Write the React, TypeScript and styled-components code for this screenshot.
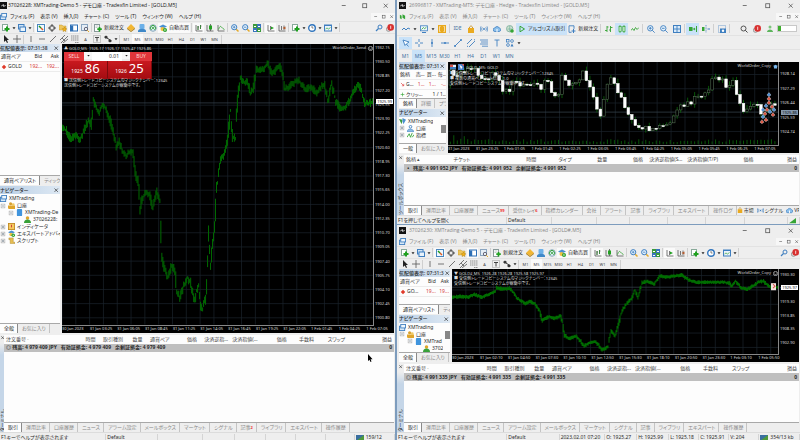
import React from "react";
import styled, { createGlobalStyle, css } from "styled-components";

const Global = createGlobalStyle`
  * { box-sizing: border-box; }
  html, body { margin: 0; background: #7d9cbd; }
  body, button, input, table {
    font-family: "Noto Sans", "Noto Sans CJK JP", sans-serif;
    font-size: 5px;
    line-height: 7px;
    color: #2b2b2b;
    font-feature-settings: "palt";
  }
  button, input { border: 0; padding: 0; margin: 0; background: none; border-radius: 0; }
`;

/* ---------- layout ---------- */

const Desktop = styled.main`
  display: grid;
  grid-template-columns: minmax(0, 395fr) minmax(0, 403fr);
  column-gap: 2px;
  height: 100vh;
  min-height: 420px;
  overflow: hidden;
`;
const RightColumn = styled.div`
  display: grid;
  grid-template-rows: minmax(0, 224fr) minmax(0, 215fr);
  row-gap: 1px;
  min-height: 0;
`;
const Window = styled.section<{ $rows: string }>`
  display: grid;
  grid-template-columns: minmax(0, 1fr);
  grid-template-rows: auto ${(p) => p.$rows} auto;
  background: #eeeeee;
  min-height: 0;
  overflow: hidden;
  white-space: nowrap;
`;
const TitleBar = styled.header<{ $inactive?: boolean }>`
  display: flex;
  align-items: center;
  gap: ${(p) => (p.$inactive ? 3 : 1)}px;
  height: 11px;
  color: ${(p) => (p.$inactive ? "#858585" : "#111")};
  padding-left: ${(p) => (p.$inactive ? 2 : 0)}px;
`;
const TitleText = styled.span`
  font-family: "Open Sans", "Noto Sans CJK JP", sans-serif;
  flex: 1;
`;
const WinButton = styled.button<{ $small?: boolean }>`
  width: ${(p) => (p.$small ? 8 : 20)}px;
  height: 7px;
  display: grid;
  place-items: center;
  color: #555;
  background: ${(p) => (p.$small ? "#f7f7f7" : "none")};
`;
const MenuBar = styled.nav<{ $inactive?: boolean }>`
  display: flex;
  align-items: center;
  height: 10px;
  padding-left: ${(p) => (p.$inactive ? 2 : 0)}px;
  color: ${(p) => (p.$inactive ? "#858585" : "#222")};
`;
const MenuButton = styled.button`
  color: inherit;
  padding: 0 3px;
`;
const Spacer = styled.span`
  flex: 1;
`;
const Bar = styled.div<{ $h: number; $inset?: boolean }>`
  display: flex;
  align-items: center;
  height: ${(p) => p.$h}px;
  padding-left: ${(p) => (p.$inset ? 2 : 0)}px;
  border-top: 1px solid #e2e2e2;
`;
const Tool = styled.button<{ $on?: boolean; $wide?: boolean }>`
  display: grid;
  place-items: center;
  width: ${(p) => (p.$wide ? 13 : 11)}px;
  height: ${(p) => (p.$wide ? 12 : 10)}px;
  flex: none;
  font-size: ${(p) => (p.$wide ? 5 : 4)}px;
  color: ${(p) => (p.$wide ? "#3d6f9f" : "#444")};
  ${(p) =>
    p.$on &&
    css`
      background: ${p.$wide ? "#c9e2f8" : "#fafafa"};
    `}
`;
const CaretBox = styled.span`
  display: grid;
  place-items: center;
  width: 5px;
  height: 8px;
`;
const Sep = styled.i`
  width: 1px;
  height: 9px;
  margin: 0 1px;
  background: #cfcfcf;
`;
const TextTool = styled.button<{ $on?: boolean; $blue?: boolean }>`
  display: flex;
  align-items: center;
  gap: 2px;
  height: ${(p) => (p.$blue ? 12 : 10)}px;
  padding: 0 ${(p) => (p.$blue ? 2 : 1)}px;
  background: ${(p) => (p.$blue ? "#c9e2f8" : p.$on ? "#fafafa" : "none")};
  color: #222;
`;
const Meter = styled.span`
  width: 20px;
  height: 7px;
  margin: 0 3px 0 1px;
  background: linear-gradient(90deg, #3fae2f 15%, #fff 15%);
  border: 1px solid #c8c8c8;
`;

/* ---------- workspace ---------- */

const Workspace = styled.div<{ $side: number; $inset?: boolean }>`
  display: grid;
  grid-template-columns: ${(p) => p.$side}px minmax(0, 1fr);
  column-gap: 2px;
  min-height: 0;
  padding-left: ${(p) => (p.$inset ? 2 : 0)}px;
  padding-right: 1px;
`;
const Sidebar = styled.aside`
  display: flex;
  flex-direction: column;
  gap: 1px;
  min-height: 0;
  overflow: hidden;
`;
const Panel = styled.section<{ $h?: number }>`
  display: flex;
  flex-direction: column;
  background: #fdfdfd;
  overflow: hidden;
  min-height: 0;
  flex: ${(p) => (p.$h ? `0 0 ${p.$h}%` : "1 1 0")};
`;
const PanelHead = styled.h2`
  display: flex;
  justify-content: space-between;
  flex: none;
  align-items: center;
  margin: 0;
  height: 8px;
  padding-right: 1px;
  overflow: hidden;
  background: linear-gradient(90deg, #b9cfe6, #dde8f3);
  font-size: 5px;
  font-weight: 500;
`;
const Fill = styled.div`
  flex: 1;
  min-height: 0;
  overflow: hidden;
  display: flex;
  align-items: flex-start;
  justify-content: space-between;
`;
const Quotes = styled.table`
  width: 100%;
  border-collapse: collapse;
  th, td {
    padding: 1px;
    height: 9px;
    font-weight: 400;
    text-align: right;
    border-bottom: 1px solid #ececec;
  }
  th:first-child, td:first-child { text-align: left; }
  td + td { color: #d63c3c; }
`;
const Symbol = styled.span`
  display: flex;
  align-items: center;
  gap: 1px;
`;
const Tree = styled.ul`
  list-style: none;
  margin: 0;
  padding: 1px 0 0;
  overflow: hidden;
`;
const Node = styled.li<{ $d: number }>`
  display: flex;
  align-items: center;
  gap: 2px;
  height: 7px;
  padding-left: ${(p) => p.$d * 8}px;
`;
const Scroll = styled.i`
  width: 5px;
  height: 8px;
  margin-top: 8px;
  background: #868686;
`;
const Tabs = styled.div`
  display: flex;
  flex: none;
  align-items: center;
  height: 10px;
  overflow: hidden;
  background: #eeeeee;
  border-top: 1px solid #a8a8a8;
`;
const Tab = styled.button<{ $on?: boolean }>`
  flex: none;
  height: 9px;
  padding: 0 3px 0 4px;
  color: ${(p) => (p.$on ? "#222" : "#888")};
  border-right: 1px solid ${(p) => (p.$on ? "#8a8a8a" : "#c4c4c4")};
  background: ${(p) => (p.$on ? "#fdfdfd" : "none")};
  sub { color: #e33; font-size: 4px; font-weight: 700; line-height: 0; vertical-align: baseline; }
`;
const TabAction = styled.button`
  display: flex;
  align-items: center;
  gap: 1px;
  padding-right: 3px;
`;

/* ---------- terminal ---------- */

const Terminal = styled.section<{ $side: number }>`
  display: grid;
  grid-template-columns: ${(p) => p.$side}px minmax(0, 1fr);
  min-height: 0;
  padding: 2px 1px 0 0;
`;
const Grip = styled.div`
  display: flex;
  flex-direction: column;
  justify-content: space-between;
  align-items: center;
  overflow: hidden;
  background: linear-gradient(#eeeeee 8px, #c5d6e8 20px, #c5d6e8);
`;
const Sideways = styled.span`
  writing-mode: vertical-rl;
  text-orientation: sideways;
  transform: rotate(180deg);
  line-height: 5px;
`;
const TerminalBody = styled.div`
  display: flex;
  flex-direction: column;
  min-height: 0;
  background: #fdfdfd;
`;
const Orders = styled.table`
  width: 100%;
  table-layout: fixed;
  border-collapse: collapse;
  th, td { padding: 0 2px; height: 9px; }
  th { font-weight: 400; color: #444; }
  td {
    height: 8px;
    font-weight: 700;
    white-space: pre;
    background: #bfbfbf;
  }
  td:last-child { text-align: right; }
`;
const Col = styled.col<{ $w: number }>`
  width: ${(p) => p.$w}%;
`;
const Th = styled.th<{ $left?: boolean }>`
  text-align: ${(p) => (p.$left ? "left" : "right")};
`;
const Status = styled.footer<{ $h: number }>`
  display: flex;
  height: ${(p) => p.$h}px;
  padding-top: 1px;
  overflow: hidden;
  border-top: 1px solid #dcdcdc;
`;
const StatusCell = styled.span<{ $grow: number }>`
  display: flex;
  align-items: center;
  gap: 2px;
  flex: ${(p) => p.$grow} 1 0;
  min-width: 0;
  height: 7px;
  padding-left: 1px;
  border-right: 1px solid #d4d4d4;
`;

/* ---------- chart ---------- */

const ChartBox = styled.div`
  position: relative;
  display: grid;
  grid-template-columns: minmax(0, 1fr) 20px;
  grid-template-rows: minmax(0, 1fr) 7px;
  background: #000;
  color: #dcdcdc;
  font-size: 4px;
  line-height: 6px;
  min-height: 0;
  overflow: hidden;
`;
const Plot = styled.svg`
  display: block;
  width: 100%;
  height: 100%;
  min-height: 0;
  border-right: 1px solid #888;
  border-bottom: 1px solid #888;
`;
const PriceAxis = styled.div<{ $top: number; $bottom: number }>`
  display: flex;
  flex-direction: column;
  justify-content: space-between;
  padding: ${(p) => `${p.$top}px 0 ${p.$bottom}px 1px`};
  min-height: 0;
`;
const PriceTag = styled.span<{ $top: number; $dim?: boolean }>`
  position: absolute;
  right: 1px;
  top: ${(p) => p.$top}%;
  padding: 0 1px;
  line-height: 5px;
  color: #111;
  background: ${(p) => (p.$dim ? "#8497ac" : "#fff")};
`;
const TimeAxis = styled.div<{ $end: number }>`
  grid-column: 1 / -1;
  display: grid;
  grid-template-columns: repeat(12, minmax(0, 1fr));
  padding-right: ${(p) => p.$end}px;
`;
const Legend = styled.div`
  position: absolute;
  top: 2px;
  left: 2px;
  display: flex;
  flex-direction: column;
  line-height: 5px;
`;
const Symbols = styled.span`
  display: flex;
  align-items: center;
  gap: 2px;
  padding-bottom: 1px;
`;
const Expert = styled.span`
  position: absolute;
  top: 1px;
  right: 21px;
  display: flex;
  align-items: center;
  gap: 2px;
`;
const Trade = styled.div`
  display: grid;
  grid-template-columns: 20px 46px 22px;
  grid-template-rows: 9px 17px;
  width: 88px;
  background: #b8141a;
`;
const TradeSide = styled.button`
  color: #ffd5d5;
  background: #e0353a;
`;
const Volume = styled.div`
  display: grid;
  grid-template-columns: 8px 1fr 8px;
  background: #ececec;
`;
const VolumeInput = styled.input`
  width: 100%;
  min-width: 0;
  background: #fff;
  text-align: right;
  padding-right: 3px;
`;
const Prices = styled.div`
  grid-column: 1 / -1;
  display: grid;
  grid-template-columns: 1fr 1fr;
`;
const Price = styled.button`
  display: flex;
  align-items: baseline;
  justify-content: center;
  gap: 2px;
  color: #fff;
  line-height: 15px;
  background: linear-gradient(#c9191f, #a30c11);
  border-right: 1px solid #7a0a0d;
  b { font-weight: 400; font-size: 13px; }
`;
const Pointer = styled.svg`
  position: absolute;
  left: 46%;
  top: 80.5%;
  width: 5px;
  height: 8px;
`;

/* ---------- icons ---------- */

const G = "#35a535";
const B = "#3f7fc0";
const Y = "#e3a92c";
const K = "#555";

const ICONS: Record<string, React.ReactNode> = {
  app: (<><rect width="8" height="8" fill="#111" /><path d="M1.5 4.5 4 3v2l2.500-1" stroke="#ddd" fill="none" /></>),
  doc: (<><rect x=".5" y="2.500" width="6" height="5" fill="#d7e8f7" stroke={B} /><rect x="2" y=".5" width="5.500" height="4" fill="#eef6fc" stroke={B} /></>),
  mt5: (<path d="M1 2l2 1v4L1 6zM4 1.500 7 3v4L4 5.500z" fill={G} />),
  plus: (<><rect x=".5" y=".5" width="5" height="6" fill="#fff" stroke="#8a9" /><path d="M5 2.500v5M2.500 5h5" stroke="#1fa01f" strokeWidth="2" /></>),
  windows: (<><rect x=".5" y=".5" width="5.500" height="4.500" fill="#cfe3f5" stroke={B} /><rect x="2" y="3" width="5.500" height="4.500" fill="#e9f3fb" stroke={B} /></>),
  market: (<><rect x=".5" y=".5" width="7" height="7" fill="#eef7ff" stroke="#4a86bd" /><path d="M2 2l2 2" stroke="#1a9a1a" strokeWidth="1.500" /><path d="M4 4l2 2" stroke="#e05a20" strokeWidth="1.500" /></>),
  target: (<><circle cx="4" cy="4" r="2.500" fill="none" stroke={K} /><path d="M4 0v3M4 5v3M0 4h3M5 4h3" stroke={K} /></>),
  folder: (<><path d="M0 1h3l1 1h3v4H0z" fill="#efc65a" stroke="#b58a20" strokeWidth=".4" /><path d="M5.500 3l.8 1.500 1.600.2-1.200 1.200.3 1.700-1.500-.8L4 7.600l.3-1.700L3.100 4.700l1.600-.2z" fill="#f5b21b" stroke="#a57a10" strokeWidth=".4" /></>),
  panel: (<><rect x=".5" y="1" width="7" height="6" fill="#fff" stroke="#2d6fb5" /><path d="M1 1.500h2.200V7H1z" fill="#2d6fb5" /></>),
  tester: (<><rect x=".5" y=".5" width="6" height="6" fill="#e6eef6" stroke="#8aa5c0" /><circle cx="5" cy="5" r="1.700" fill="none" stroke="#667" /><path d="M6.200 6.200 8 8" stroke={Y} /></>),
  order: (<><rect x=".5" y=".5" width="5" height="7" fill="#fff" stroke="#899" /><path d="M1.500 2h3M1.500 3.500h2" stroke="#899" strokeWidth=".5" /><path d="M5.500 3v4.500M3.300 5.200h4.500" stroke="#1fa01f" strokeWidth="1.700" /></>),
  diamond: (<><path d="M4 0 8 4 4 7 0 4z" fill="#f2b632" /><path d="M0 4l4 3 4-3v1L4 8 0 5z" fill="#a87a16" /></>),
  signal: (<><rect x="1.500" y="0" width="5" height="5" rx="1" fill="#6cb0e8" /><path d="M0 7c0-3 8-3 8 0v1H0z" fill="#3f88c8" /></>),
  globe: (<><circle cx="4" cy="4" r="3.300" fill="#d9e9f5" stroke="#8ab" /><path d="M2.500 6a2.500 2.500 0 1 1 3 0" fill="none" stroke={G} /><circle cx="4" cy="4" r="1" fill={G} /></>),
  expert: (<><path d="M0 2.500 4 .5l4 2-4 2z" fill="#4a90d0" /><circle cx="3.500" cy="5" r="2" fill="#f0c040" /><circle cx="6" cy="6" r="2" fill="#2ba02b" /><path d="M5.500 5v2l1.500-1z" fill="#fff" /></>),
  bars: (<><path d="M1 1v6h6.500M3 2v4M5.500 1v4M3 3h1M5.500 2h1" stroke={K} strokeWidth=".8" fill="none" /><path d="M3 2v4M5.500 1v4" stroke="#383" strokeWidth=".8" /></>),
  candles: (<><path d="M1 1v6h6.500M4.500 0v7" stroke={K} strokeWidth=".8" fill="none" /><rect x="3" y="1.500" width="3" height="4" fill="#22a022" /></>),
  line: (<><path d="M1 1v6h6.500" stroke={K} strokeWidth=".8" fill="none" /><path d="M1.500 5.500Q3 1 4.500 3t3 2.500" stroke={G} fill="none" strokeWidth=".8" /></>),
  zoomin: (<><path d="M5 5l2.500 2.500" stroke={Y} strokeWidth="1.500" /><circle cx="3.200" cy="3.200" r="2.600" fill="#e3f1fc" stroke={B} /><path d="M3.200 2v2.400M2 3.200h2.400" stroke={B} strokeWidth=".8" /></>),
  zoomout: (<><path d="M5 5l2.500 2.500" stroke={Y} strokeWidth="1.500" /><circle cx="3.200" cy="3.200" r="2.600" fill="#e3f1fc" stroke={B} /><path d="M2 3.200h2.400" stroke={B} strokeWidth=".8" /></>),
  tile: (<><path d="M0 0h4v4H0zM4 4h4v4H4z" fill="#3b9b3b" /><path d="M4 0h4v4H4zM0 4h4v4H0z" fill="#3a74bd" /><path d="M1 2h2v1H1zM5 2h2v1H5zM1 6h2v1H1zM5 6h2v1H5z" fill="#fff" /></>),
  shift: (<><path d="M1 1v6h6.500M3.500 2v4" stroke={K} strokeWidth=".8" fill="none" /><path d="M4 2.500 7 4 4 5.500z" fill="#22a022" /></>),
  shift2: (<><path d="M1 1v6h6.500M3.500 2v4M6 1.500V6" stroke={K} strokeWidth=".8" fill="none" /><path d="M7.500 2.500 4.500 4l3 1.500z" fill="#b55a2a" /></>),
  clock: (<><circle cx="4" cy="4" r="3.300" fill="#fff" stroke="#2f74bd" strokeWidth="1.400" /><path d="M4 2v2h1.500" stroke={K} strokeWidth=".7" fill="none" /></>),
  template: (<><rect x=".5" y="1" width="7" height="6" fill="#e9f2fa" stroke={B} /><path d="M.5 1.500h7" stroke={B} /><path d="M1.500 5l1.500-1 1.500 1 2-1.500" stroke={G} strokeWidth=".7" fill="none" /></>),
  search: (<><circle cx="5" cy="3" r="2" fill="none" stroke="#3f7fc0" /><path d="M3.500 4.500 1 7" stroke="#3f7fc0" strokeWidth="1.200" /></>),
  search5: (<><circle cx="3.500" cy="3.500" r="2.500" fill="none" stroke="#444" strokeWidth=".9" /><path d="M5.300 5.300 7.500 7.500" stroke="#444" /></>),
  bell: (<><circle cx="2.500" cy="5.200" r="2.200" fill="#ddd" stroke="#777" strokeWidth=".6" /><circle cx="4.700" cy="3.400" r="3.300" fill="#d8302f" /><path d="M4.700 1.700v3.200" stroke="#fff" strokeWidth=".8" /></>),
  caret: (<path d="M2 3h4L4 5.500z" fill="#222" />),
  cursor: (<path d="M2 0v7l1.700-1.500L5 8l1-.5L4.900 5H7z" fill="#222" />),
  cross: (<path d="M4 0v8M0 4h8" stroke={K} strokeWidth=".8" />),
  vline: (<path d="M4 1v6" stroke={K} strokeWidth=".8" />),
  hline: (<path d="M1 4h6" stroke={K} strokeWidth=".8" />),
  diag: (<path d="M1 7l6-6" stroke={K} strokeWidth=".8" />),
  channel: (<path d="M0 5l5-5M1 8l7-7M3 8l5-4M2 3l3 3" stroke={K} strokeWidth=".8" />),
  fibo: (<path d="M0 1h8M0 3h8M0 5h8M4 7.500h4" stroke="#777" strokeWidth=".8" strokeDasharray="1.500 .5" />),
  label: (<><rect x=".5" y=".5" width="7" height="7" fill="none" stroke="#777" strokeWidth=".7" strokeDasharray="1 1" /><path d="M2 2.500h4M4 2.500V6.500" stroke="#444" /></>),
  arrows: (<><path d="M0 2l2-1.500L4 2 2 4zM4 6l2-2 2 2-2 1.500z" fill="#333" /><path d="M3 3l3 2" stroke="#333" /></>),
  wave5: (<path d="M0 5l2-2 2 2 2-2 2 1" fill="none" stroke={B} strokeWidth="1" />),
  screen5: (<><rect x=".5" y=".8" width="7" height="5" fill="#eaf4fc" stroke={B} strokeWidth=".8" /><path d="M2 7.500h4" stroke={B} /><path d="M1.500 4.500l2-2 1.200 1.200L6.500 2" fill="none" stroke={G} strokeWidth=".8" /></>),
  box5: (<><rect width="8" height="8" fill="#e9a91c" /><path d="M2.500 1.500h-1v5h1M5.500 1.500h1v5h-1" stroke="#fff" strokeWidth=".6" fill="none" /></>),
  bag5: (<><path d="M2.500 3V2q1.500-2.500 3 0v1" fill="none" stroke="#c58a12" strokeWidth=".8" /><path d="M1 3h6v5H1z" fill="#eaaa20" /></>),
  radio5: (<><circle cx="4" cy="4" r=".9" fill={B} /><path d="M2.300 2.300q-1.500 1.700 0 3.400M5.700 2.300q1.500 1.700 0 3.400M1 1.300q-1.500 2.700 0 5.400M7 1.300q1.500 2.700 0 5.400" fill="none" stroke={B} strokeWidth=".7" /></>),
  cloud5: (<><path d="M2 6.500A1.700 1.700 0 0 1 1.800 3 2.500 2.500 0 0 1 6.300 3a1.800 1.800 0 0 1 0 3.500z" fill="#8cc0ec" stroke={B} strokeWidth=".8" /><path d="M4 4v3" stroke="#fff" /></>),
  globe5: (<><circle cx="3.700" cy="3.700" r="3.200" fill="#cfe3d0" stroke="#7a9" strokeWidth=".8" /><path d="M1.500 4h4.500M3.700 1v5.500" stroke="#6a9" strokeWidth=".6" /><circle cx="6" cy="6" r="1.800" fill={G} /></>),
  play5: (<path d="M2 1.200 6.500 4 2 6.800z" fill="none" stroke={G} strokeWidth="1" />),
  order5: (<><path d="M1 .8h5v3M1 .8v6.500h2.500" fill="none" stroke={B} strokeWidth=".9" /><path d="M5.500 4v4M3.500 6h4" stroke={B} /></>),
  bars5: (<path d="M2 1v6M0 5.500h2M2 2h1.500M5.500 1v6M4 5h1.500M5.500 2.500h2" stroke={G} strokeWidth=".9" />),
  candles5: (<><path d="M2 0v8M6 0v8" stroke={G} strokeWidth=".7" /><rect x="1" y="1.500" width="2.200" height="5" fill="#c9ecd0" stroke={G} strokeWidth=".7" /><rect x="4.800" y="1.500" width="2.200" height="5" fill="#c9ecd0" stroke={G} strokeWidth=".7" /></>),
  line5: (<path d="M0 5.500l1.500-2 1.500 2 1.500-3 1.500 2L8 2.500" fill="none" stroke={G} strokeWidth=".9" />),
  zoomin5: (<><circle cx="3.300" cy="3.300" r="2.700" fill="#e3f1fc" stroke={B} strokeWidth=".9" /><path d="M5.300 5.300 7.700 7.700M3.300 2v2.600M2 3.300h2.600" stroke={B} strokeWidth=".9" /></>),
  zoomout5: (<><circle cx="3.300" cy="3.300" r="2.700" fill="#e3f1fc" stroke={B} strokeWidth=".9" /><path d="M5.300 5.300 7.700 7.700M2 3.300h2.600" stroke={B} strokeWidth=".9" /></>),
  tile5: (<><rect x=".5" y=".5" width="7" height="7" fill="#d8eafa" stroke={B} /><path d="M4 0v8M0 4h8" stroke={B} strokeWidth=".9" /></>),
  shift5: (<><rect y="2" width="3.500" height="4" fill={G} /><path d="M3.500 4h2M7.500 1v6" stroke={G} /><path d="M5 2.500 6.500 4 5 5.500z" fill={G} /></>),
  shiftb5: (<><rect y="2" width="2.500" height="4" fill={G} /><path d="M4 0v8" stroke={B} strokeDasharray="1 .6" strokeWidth=".8" /><path d="M8 4H5.500" stroke={B} /></>),
  camera5: (<><rect x=".5" y=".5" width="7" height="7" fill="none" stroke={B} strokeWidth=".7" strokeDasharray="1 1" /><rect x="2" y="3.500" width="6" height="4.500" fill={B} /><circle cx="5" cy="5.700" r="1.200" fill="#fff" /></>),
  user5: (<><circle cx="4" cy="2" r="1.500" fill="#7cc47c" /><path d="M1 7c0-3.500 6-3.500 6 0z" fill="#5cb45c" /></>),
  cursor5: (<path d="M1 1l2 5.500L4.300 5 6.500 7.500M1 1l6 2L4.300 5" fill="#fff" stroke={B} strokeWidth=".9" />),
  cross5: (<path d="M4 0v3M4 5v3M0 4h3M5 4h3" stroke={B} strokeWidth=".9" />),
  vline5: (<><path d="M4 0v8" stroke={B} strokeWidth=".9" /><circle cx="4" cy="4" r="1" fill={B} /></>),
  hline5: (<><path d="M0 4h8" stroke={B} strokeWidth=".9" /><circle cx="4" cy="4" r="1" fill={B} /></>),
  diag5: (<><path d="M1 7l6-6" stroke={B} strokeWidth=".9" /><circle cx="1" cy="7" r="1" fill={B} /><circle cx="7" cy="1" r="1" fill={B} /></>),
  channel5: (<path d="M0 5l5-5M2 8l6-6M0 7l1 .7M7 .5l1 .5" stroke={B} strokeWidth=".9" />),
  fibo5: (<path d="M0 1h8M1 3h7M0 5h8M2 7.200h6" stroke={B} strokeWidth=".8" />),
  text5: (<path d="M1.500 1h5M4 1v6.500" stroke={B} strokeWidth=".9" />),
  shapes5: (<><rect x=".5" y=".5" width="2.500" height="2.500" fill="none" stroke={B} strokeWidth=".8" /><circle cx="6" cy="2" r="1.400" fill="none" stroke={B} strokeWidth=".8" /><circle cx="2" cy="6" r="1.400" fill="none" stroke={B} strokeWidth=".8" /><path d="M4.500 7.500 6 4.500l1.500 3z" fill={B} /></>),
  gold: (<path d="M4 1l3 3-3 3-3-3z" fill="#e03a2a" />),
  down: (<path d="M1.500 1.500 6 6M6 3v3H3" stroke="#d33" fill="none" />),
  add: (<path d="M4 1v6M1 4h6" stroke={G} />),
  people: (<><circle cx="3" cy="2" r="1.800" fill="#d8a030" /><path d="M0 7V4h8v4H1z" fill="#e0a52a" /><circle cx="6" cy="3" r="1.600" fill="#f0c860" /></>),
  peopleB: (<><circle cx="4" cy="2" r="1.500" fill="none" stroke={B} /><path d="M0 7.500Q1 4 4 4.500T8 7.500z" fill="#8abde6" stroke={B} strokeWidth=".7" /></>),
  server: (<rect x="1" y="0" width="6" height="8" rx="1" fill="#3f94dd" />),
  user: (<><circle cx="4" cy="2.300" r="2" fill="#e0a52a" /><path d="M0 8q0-4 4-4t4 4z" fill="#38a038" /></>),
  indicator: (<><rect x=".5" y=".5" width="7" height="7" fill="#f5c860" stroke="#c08a20" /><path d="M4 2v3" stroke="#c33" /></>),
  script: (<path d="M1 1h5v5h2v1.500H2.500V3H1z" fill="#e8be50" stroke="#a8842a" strokeWidth=".5" />),
  indic5: (<path d="M0 6l2.500-4L4 6l2-5M6 6l2-3" stroke={G} fill="none" />),
  logo5: (<><path d="M0 1l4 1-1 5z" fill="#3d9a3d" /><path d="M4 0l4 2-3 5-1-3z" fill="#4a90d0" /></>),
  expand: (<><rect x="1.500" y="1.500" width="5" height="5" fill="#fff" stroke="#aaa" strokeWidth=".8" /><path d="M2.500 4h3M4 2.500v3" stroke="#456" strokeWidth=".7" /></>),
  collapse: (<><rect x="1.500" y="1.500" width="5" height="5" fill="#fff" stroke="#aaa" strokeWidth=".8" /><path d="M2.500 4h3" stroke="#456" strokeWidth=".7" /></>),
  min: (<path d="M2 4h4.500" stroke="currentColor" strokeWidth=".9" />),
  max: (<rect x="2" y="2" width="4.500" height="4.500" fill="none" stroke="currentColor" strokeWidth=".9" />),
  close: (<path d="M2 2l4.500 4.500M6.500 2 2 6.500" stroke="currentColor" strokeWidth=".9" />),
  conn: (<><rect y="1" width="8" height="6" fill="#3a6f9f" /><path d="M0 7l8-6v6z" fill="#4f9a3a" /></>),
  strength: (<path d="M0 7l8-6v6z" fill={G} />),
  smile: (<><circle cx="4" cy="4" r="3.400" fill="none" stroke="#ddd" /><path d="M2.300 4.800q1.700 1.700 3.400 0M2.500 3h.8M4.700 3h.8" stroke="#ddd" fill="none" /></>),
  hat: (<path d="M0 3l4-2 4 2-1.500 1v3h-5V4z" fill="#7ab8ee" />),
  flagA: (<><rect y="1" width="8" height="6" fill="#e8eef5" /><path d="M0 4h8v3H0z" fill="#3f7fc0" /><path d="M0 1h4v3H0z" fill="#d9534a" /></>),
  flagB: (<><rect y="0" width="8" height="8" fill="#4a7fc8" /><path d="M2 1l4 3-2 3z" fill="#fff" /><path d="M5 0h3v3z" fill="#d9534a" /></>),
};

const IconSvg = styled.svg<{ $s: number }>`
  display: block;
  flex: none;
  width: ${(p) => p.$s}px;
  height: ${(p) => p.$s}px;
`;
const Icon = ({ n, s = 8 }: { n: string; s?: number }) => (
  <IconSvg $s={s} viewBox="0 0 8 8" aria-hidden="true">{ICONS[n]}</IconSvg>
);

/* ---------- pieces ---------- */

const Title = ({ text, inactive }: { text: string; inactive?: boolean }) => (
  <TitleBar $inactive={inactive}>
    <Icon n="app" s={7} />
    <TitleText>{text}</TitleText>
    {["min", "max", "close"].map((n) => (
      <WinButton key={n} aria-label={n}><Icon n={n} s={7} /></WinButton>
    ))}
  </TitleBar>
);

const MENUS = ["ファイル (F)", "表示 (V)", "挿入(I)", "チャート (C)", "ツール (T)", "ウィンドウ (W)", "ヘルプ (H)"];
const Menu = ({ inactive, mt5 }: { inactive?: boolean; mt5?: boolean }) => (
  <MenuBar $inactive={inactive}>
    <Icon n={mt5 ? "mt5" : "doc"} s={7} />
    {MENUS.map((m) => <MenuButton key={m}>{m}</MenuButton>)}
    <Spacer />
    {["min", "max", "close"].map((n) => (
      <WinButton key={n} $small aria-label={`chart ${n}`}><Icon n={n} s={5} /></WinButton>
    ))}
  </MenuBar>
);

/* "|" is a separator, "v" a caret, a leading "*" marks a pressed button */
const Tools = ({ items, wide }: { items: string[]; wide?: boolean }) => (
  <>
    {items.map((raw, i) => {
      if (raw === "|") return <Sep key={i} />;
      if (raw === "v") return <CaretBox key={i}><Icon n="caret" s={6} /></CaretBox>;
      const on = raw[0] === "*";
      const n = on ? raw.slice(1) : raw;
      return (
        <Tool key={i} $on={on} $wide={wide} aria-label={n}>
          {ICONS[n] ? <Icon n={n} /> : n}
        </Tool>
      );
    })}
  </>
);

const Mt4Bars = ({ inset }: { inset?: boolean }) => (
  <>
    <Bar $h={12} $inset={inset}>
      <Tools items={["plus", "v", "windows", "v", "|", "*market", "target", "folder", "*panel", "tester", "|"]} />
      <TextTool><Icon n="order" />新規注文</TextTool>
      <Tools items={["diamond", "signal", "globe"]} />
      <TextTool $on><Icon n="expert" />自動売買</TextTool>
      <Tools items={["|", "*bars", "candles", "line", "|", "zoomin", "zoomout", "tile", "|", "*shift", "shift2", "|", "plus", "v", "clock", "v", "template", "v", "|"]} />
      <Spacer />
      <Tools items={["search", "bell"]} />
    </Bar>
    <Bar $h={11} $inset={inset}>
      <Tools items={["cursor", "cross", "|", "vline", "hline", "diag", "channel", "fibo", "A", "label", "arrows", "v", "|", "M1", "*M5", "M15", "M30", "H1", "H4", "D1", "W1", "MN", "|"]} />
    </Bar>
  </>
);

const Mt5Bars = () => (
  <>
    <Bar $h={14} $inset>
      <Tools wide items={["wave5", "v", "screen5", "v", "box5", "|", "IDE", "bag5", "radio5", "cloud5", "globe5"]} />
      <TextTool $blue><Icon n="play5" />アルゴリズム取引</TextTool>
      <TextTool><Icon n="order5" />新規注文</TextTool>
      <Tools wide items={["|", "bars5", "*candles5", "line5", "|", "zoomin5", "zoomout5", "tile5", "|", "*shift5", "shiftb5", "|", "camera5", "|"]} />
      <Spacer />
      <Tools wide items={["search5", "bell", "user5"]} />
      <Meter />
    </Bar>
    <Bar $h={14} $inset>
      <Tools wide items={["*cursor5", "cross5", "vline5", "hline5", "diag5", "channel5", "fibo5", "text5", "shapes5", "v"]} />
    </Bar>
    <Bar $h={13} $inset>
      <Tools wide items={["M1", "*M5", "M15", "M30", "H1", "H4", "D1", "W1", "MN"]} />
    </Bar>
  </>
);

const Head = ({ children }: { children: React.ReactNode }) => (
  <PanelHead><span>{children}</span><Icon n="close" s={6} /></PanelHead>
);
const TabStrip = ({ items, children }: { items: string[]; children?: React.ReactNode }) => (
  <Tabs role="tablist">
    {items.map((t, i) => {
      const [name, count] = t.split("#");
      return (
        <Tab key={t} role="tab" $on={i === 0} aria-selected={i === 0}>
          {name}{count && <sub>{count}</sub>}
        </Tab>
      );
    })}
    {children}
  </Tabs>
);

type Leaf = [number, string, string, string];
const Navigator = ({ nodes, tabs, scroll }: { nodes: Leaf[]; tabs: string[]; scroll?: boolean }) => (
  <Panel>
    <Head>ナビゲーター</Head>
    <Fill>
      <Tree>
        {nodes.map(([d, box, icon, text]) => (
          <Node key={text} $d={d}>{box && <Icon n={box} s={6} />}<Icon n={icon} s={7} />{text}</Node>
        ))}
      </Tree>
      {scroll && <Scroll />}
    </Fill>
    <TabStrip items={tabs} />
  </Panel>
);

const Market = ({ time, symbol, quote, height }: { time: string; symbol: string; quote: string; height: number }) => (
  <Panel $h={height}>
    <Head>気配値表示: {time}</Head>
    <Fill>
      <Quotes>
        <thead><tr><th>通貨ペア</th><th>Bid</th><th>Ask</th></tr></thead>
        <tbody><tr><td><Symbol><Icon n="gold" s={6} />{symbol}</Symbol></td><td>{quote}</td><td>{quote}</td></tr></tbody>
      </Quotes>
    </Fill>
    <TabStrip items={["通貨ペアリスト", "ティックチャート"]} />
  </Panel>
);

type ColSpec = [string, number, boolean?];
const OrderPanel = (p: { label: string; side: number; cols: ColSpec[]; summary: string; tabs: string[]; extra?: React.ReactNode }) => (
  <Terminal $side={p.side}>
    <Grip><Icon n="close" s={5} /><Sideways>{p.label}</Sideways></Grip>
    <TerminalBody>
      <Orders>
        <colgroup>{p.cols.map(([, w], i) => <Col key={i} $w={w} />)}</colgroup>
        <thead><tr>{p.cols.map(([t, , left], i) => <Th key={i} $left={left}>{t}</Th>)}</tr></thead>
        <tbody><tr><td colSpan={p.cols.length - 1}>{p.summary}</td><td>0</td></tr></tbody>
      </Orders>
      <Spacer />
      <TabStrip items={p.tabs}>{p.extra}</TabStrip>
    </TerminalBody>
  </Terminal>
);

const MT4_COLS: ColSpec[] = [
  ["注文番号 ·", 10, true], ["時間", 14], ["取引種別", 7], ["数量", 5], ["通貨ペア", 7], ["価格", 7], ["決済逆指...", 8],
  ["決済指値(...", 7], ["価格", 8], ["手数料", 7], ["スワップ", 8], ["損益", 12],
];
const MT5_COLS: ColSpec[] = [
  ["銘柄  ▴", 12, true], ["チケット", 11, true], ["時間", 11], ["タイプ", 9], ["数量", 9], ["価格", 9],
  ["決済逆指値(S...", 10], ["決済指値(T/P)", 9], ["価格", 9], ["損益", 11],
];
const summary = (n: string) => `残高: ${n} JPY   有効証拠金: ${n}   余剰証拠金: ${n}`;
const mt4Tabs = (journal: string) => [
  "取引", "運用比率", "口座履歴", "ニュース", "アラーム設定", "メールボックス", "マーケット", "シグナル", journal, "ライブラリ", "エキスパート", "操作履歴",
];

/* ---------- chart drawing ---------- */

type Pt = [number, number];
const rnd = (i: number) => {
  const v = Math.sin(i * 127.1 + 11.7) * 43758.5453;
  return v - Math.floor(v);
};
const at = (pts: Pt[], x: number) => {
  const k = pts.findIndex((p) => p[0] >= x);
  if (k <= 0) return pts[k === 0 ? 0 : pts.length - 1][1];
  const [x0, y0] = pts[k - 1];
  const [x1, y1] = pts[k];
  return y0 + ((y1 - y0) * (x - x0)) / (x1 - x0);
};
const barPath = (pts: Pt[], amp: number) => {
  let d = "";
  for (let x = pts[0][0]; x <= pts[pts.length - 1][0]; x += 1) {
    const y = at(pts, x);
    const slope = Math.abs(at(pts, x + 1) - at(pts, x - 1));
    const r = amp + slope * 0.3;
    d += `M${x + 0.5} ${(y - 1 - rnd(x) * r).toFixed(1)}V${(y + 1 + rnd(x + 500) * r).toFixed(1)}`;
  }
  return d;
};
const gridPath = (w: number, h: number, x0: number, y0: number) => {
  let d = "";
  for (let x = x0; x < w; x += 13.9) d += `M${x.toFixed(1)} 0V${h}`;
  for (let y = y0; y < h; y += 14.2) d += `M0 ${y.toFixed(1)}H${w}`;
  return d;
};

const SEND: Pt[] = [[0,84],[4,87],[8,95],[13,92],[18,96],[22,85],[26,77],[29,81],[31,56],[34,65],[37,69],[40,61],[44,65],[48,77],[51,89],[54,102],[57,98],[60,107],[64,112],[68,107],[71,109],[74,132],[76,137],[78,165],[80,155],[84,149],[88,152],[91,165],[95,148],[98,158],[99,182],[100,212],[103,227],[106,233],[110,222],[113,227],[115,247],[118,255],[122,242],[126,234],[129,240],[133,257],[135,247],[137,242],[139,260],[141,265],[144,254],[146,222],[147,190],[149,222],[151,202],[153,182],[155,147],[157,132],[159,115],[162,112],[166,97],[169,67],[171,92],[174,95],[176,57],[179,35],[183,39],[186,37],[189,49],[192,45],[195,25],[200,27],[204,23],[206,19],[210,29],[214,27],[218,21],[221,29],[224,45],[228,43],[234,38],[238,37],[244,45],[250,43],[256,49],[261,42],[264,41],[267,57],[271,40],[275,57],[280,65],[284,64],[290,55],[296,42],[298,40],[301,47],[304,59],[308,60],[312,58]];
const COPY: Pt[] = [[0,28],[7,27],[15,28],[22,25],[29,28],[37,25],[43,22],[44,18],[50,20],[57,19],[61,23],[65,29],[73,34],[78,32],[82,34],[87,41],[90,51],[97,47],[103,49],[108,46],[110,51],[112,65],[117,69],[124,66],[128,71],[132,76],[139,72],[144,72],[150,80],[156,77],[159,61],[163,66],[167,53],[170,41],[175,34],[180,29],[183,21],[186,28],[190,14],[195,12],[202,15],[208,7],[215,8],[222,7],[230,6],[237,11],[244,13],[252,13],[262,13],[272,13],[278,14],[280,17],[284,12],[290,19],[295,20],[301,17],[307,13],[312,12],[317,17],[322,19],[326,18]];
const HEDGE: Pt[] = [[0,23],[4,10],[9,15],[20,10],[30,9],[40,16],[48,10],[52,18],[54,28],[60,30],[66,22],[69,16],[75,28],[80,22],[87,24],[94,26],[100,20],[105,31],[110,36],[114,29],[115,13],[120,22],[127,24],[132,16],[137,10],[142,20],[145,33],[150,49],[153,54],[156,42],[159,27],[162,15],[166,17],[170,28],[174,31],[179,48],[184,53],[189,63],[196,63],[202,68],[209,69],[215,65],[222,60],[227,50],[235,46],[242,40],[249,36],[255,30],[259,33],[262,23],[269,17],[274,13],[280,25],[285,18],[290,33],[294,50],[302,48],[309,42],[317,52],[322,45],[327,40]];

const Candles = () => {
  const out: React.ReactNode[] = [];
  let open = at(HEDGE, 0);
  for (let i = 0; i < 94; i += 1) {
    const x = 1 + i * 3.48;
    const close = at(HEDGE, x + 3) + (rnd(i + 40) - 0.5) * 8;
    const top = Math.min(open, close);
    const h = Math.max(1, Math.abs(open - close));
    const fall = close > open;
    open = close;
    out.push(
      <g key={i}>
        <path d={`M${x + 1.3} ${top - rnd(i + 9) * 5}V${top + h + rnd(i + 77) * 4}M${x + 1.3} 82V${80 - rnd(i + 3) * (i < 5 ? 7 : 3)}`} stroke="#0a6a0a" strokeWidth=".8" />
        <rect x={x} y={top} width="2.600" height={h} fill={fall ? "#fff" : "#000"} stroke={fall ? "#fff" : "#5d7a5d"} strokeWidth=".5" />
      </g>
    );
  }
  return <>{out}</>;
};
const Markers = () => (
  <g>
    {[[320,33,0],[320,37,1],[320,41,1],[317,44,0],[323,45,1],[314,48,0],[318,48,1],[325,48,0],[316,52,1],[321,50,0],[314,55,0],[324,53,1],[317,58,1],[313,60,1]].map(([x, y, red], i) => (
      <path key={i} d={`M${x - 2} ${y}l2-2.500 2 2.500-2 1.500z`} fill={red ? "#e0553f" : "#4c8fd6"} stroke="#dfe8f2" strokeWidth=".4" />
    ))}
  </g>
);

interface ChartProps {
  w: number; h: number; x0: number; y0: number;
  prices: string[]; top: number; bottom: number;
  tag: string; tagTop: number; dim?: boolean; lineY: number;
  times: string[]; end: number;
  expert: React.ReactNode; legend: React.ReactNode; children: React.ReactNode;
}
const Chart = (p: ChartProps) => (
  <ChartBox>
    <Plot viewBox={`0 0 ${p.w} ${p.h}`} preserveAspectRatio="none" aria-label="price chart">
      <path d={gridPath(p.w, p.h, p.x0, p.y0)} stroke="#1b242c" strokeWidth=".7" />
      <path d={`M0 ${p.lineY}H${p.w}`} stroke="#3a4652" strokeWidth=".7" />
      {p.children}
    </Plot>
    <PriceAxis $top={p.top} $bottom={p.bottom}>{p.prices.map((t) => <span key={t}>{t}</span>)}</PriceAxis>
    <TimeAxis $end={p.end}>{p.times.map((t) => <span key={t}>{t}</span>)}</TimeAxis>
    <PriceTag $top={p.tagTop} $dim={p.dim}>{p.tag}</PriceTag>
    <Expert>{p.expert}</Expert>
    <Legend>{p.legend}</Legend>
  </ChartBox>
);

const day = (first: string, a: string[], b: string[]) => [first, ...a.map((t) => `31 Jan ${t}`), ...b.map((t) => `1 Feb ${t}`)];
const SEND_PRICES = Array.from({ length: 20 }, (_, i) => (1932.15 - i * 1.65).toFixed(2));

const TradePanel = () => (
  <Trade>
    <TradeSide>SELL</TradeSide>
    <Volume>
      <WinButton $small aria-label="decrease"><Icon n="caret" s={5} /></WinButton>
      <VolumeInput aria-label="volume" defaultValue="0.01" />
      <WinButton $small aria-label="increase"><Icon n="caret" s={5} /></WinButton>
    </Volume>
    <TradeSide>BUY</TradeSide>
    <Prices>
      <Price>1925<b>86</b></Price>
      <Price>1926<b>25</b></Price>
    </Prices>
  </Trade>
);

export default function App() {
  return (
    <>
      <Global />
      <Desktop>
        <Window $rows="minmax(0, 290fr) minmax(0, 100fr)">
          <div>
            <Title text="37026228: XMTrading-Demo 5 - デモ口座 - Tradexfin Limited - [GOLD,M5]" />
            <Menu />
            <Mt4Bars />
          </div>
          <Workspace $side={60}>
            <Sidebar>
              <Market time="07:31:38" symbol="GOLD" quote="192..." height={49} />
              <Navigator
                nodes={[
                  [0, "", "doc", "XMTrading"], [0, "collapse", "people", "口座"], [1, "collapse", "server", "XMTrading-De"],
                  [3, "", "user", "37026228:"], [0, "expand", "indicator", "インディケータ"],
                  [0, "expand", "expert", "エキスパートアドバイザ"], [0, "expand", "script", "スクリプト"],
                ]}
                tabs={["全般", "お気に入り"]}
              />
            </Sidebar>
            <Chart
              w={313} h={281} x0={0} y0={4.5} prices={SEND_PRICES} top={1} bottom={4}
              tag="1925.99" tagTop={19} lineY={59}
              times={day("30 Jan 2023", ["03:25", "06:05", "08:45", "11:25", "14:05", "16:45", "19:25", "22:05"], ["01:45", "04:25", "07:05"])} end={0}
              expert={<>WorldOrder_Send<Icon n="smile" s={5} /></>}
              legend={<><Symbols>▲ GOLD,M5&nbsp; 1926.17 1926.17 1925.47 1925.86</Symbols><TradePanel /><span>■ 送信側トレードコピーシステムのマジックナンバー：12345</span><span>送信側トレードコピーシステムが稼働中です。</span></>}
            >
              <path d={barPath(SEND, 3)} stroke="#006c00" strokeWidth="1" />
            </Chart>
          </Workspace>
          <OrderPanel label="ターミナル" side={4} cols={MT4_COLS} summary={`◎ ${summary("4 979 409")}`} tabs={mt4Tabs("記事#2")} />
          <Status $h={8}>
            <StatusCell $grow={109}>F1キーでヘルプが表示されます</StatusCell>
            <StatusCell $grow={52}>Default</StatusCell>
            {[45, 31, 31, 29, 29, 28].map((g, i) => <StatusCell key={i} $grow={g} />)}
            <StatusCell $grow={40}><Icon n="conn" />159/12</StatusCell>
          </Status>
        </Window>

        <RightColumn>
          <Window $rows="minmax(0, 90fr) minmax(0, 61fr)">
            <div>
              <Title inactive text="26996817 - XMTrading-MT5: デモ口座 - Hedge - Tradexfin Limited - [GOLD,M5]" />
              <Menu mt5 inactive />
              <Mt5Bars />
            </div>
            <Workspace $side={47} $inset>
              <Sidebar>
                <Panel $h={50}>
                  <Head>気配値表示: 07:31</Head>
                  <Fill>
                    <Quotes>
                      <thead><tr><th>銘柄</th><th>売...</th><th>買...</th><th>毎...</th></tr></thead>
                      <tbody>
                        <tr><td><Symbol><Icon n="down" s={5} />G...</Symbol></td><td>1...</td><td>1...</td><td>-...</td></tr>
                        <tr><th colSpan={2}><Symbol><Icon n="add" s={5} />クリッ...</Symbol></th><th colSpan={2}>1 / 1...</th></tr>
                      </tbody>
                    </Quotes>
                  </Fill>
                  <TabStrip items={["銘柄", "詳細", "プライス"]} />
                </Panel>
                <Navigator scroll nodes={[[0, "", "logo5", "XMTrading"], [0, "expand", "peopleB", "口座"], [0, "expand", "indic5", "指標"]]} tabs={["一般", "お気に入り"]} />
              </Sidebar>
              <Chart
                w={329} h={83} x0={0} y0={12.5} prices={["1928.14", "1927.29", "1926.44", "1925.59", "1924.74"]} top={9} bottom={11}
                tag="1925.86" tagTop={53} dim lineY={50}
                times={day("31 Jan 2023", ["23:25"], ["01:05", "01:45", "02:25", "03:05", "03:45", "04:25", "05:05", "05:45", "06:25", "07:05"])} end={17}
                expert={<>WorldOrder_Copy<Icon n="hat" s={5} /></>}
                legend={<><Symbols><Icon n="flagA" s={6} /><Icon n="flagB" s={6} />GOLD, M5: GOLD</Symbols><span>■ 受信側トレードコピーシステムのマジックナンバー：12345</span><span>■ 複数の通貨ペアロット倍率：1.0</span><span>受信側トレードコピーシステムが稼働中です。</span></>}
              >
                <Candles />
                <Markers />
              </Chart>
            </Workspace>
            <OrderPanel
              label="ツールボックス" side={7} cols={MT5_COLS} summary={` •   ${summary("4 991 952")}`}
              tabs={["取引", "運用比率", "口座履歴", "ニュース#99", "受信トレイ#6", "指標カレンダー", "会社", "アラート", "記事", "ライブラリ", "エキスパート", "操作ログ"]}
              extra={<><Spacer /><TabAction><Icon n="bag5" s={6} />市場</TabAction><TabAction><Icon n="radio5" s={7} />シグナル</TabAction><TabAction><Icon n="cloud5" s={7} />VPS</TabAction></>}
            />
            <Status $h={9}>
              <StatusCell $grow={112}>F1を押してヘルプを開く</StatusCell>
              <StatusCell $grow={44}>Default</StatusCell>
              {[45, 32, 38, 37, 38, 43].map((g, i) => <StatusCell key={i} $grow={g} />)}
              <StatusCell $grow={10}><Icon n="strength" s={7} /></StatusCell>
            </Status>
          </Window>

          <Window $rows="minmax(0, 93fr) minmax(0, 70fr)">
            <div>
              <Title inactive text="37026230: XMTrading-Demo 5 - デモ口座 - Tradexfin Limited - [GOLD#,M5]" />
              <Menu inactive />
              <Mt4Bars inset />
            </div>
            <Workspace $side={51} $inset>
              <Sidebar>
                <Market time="07:31:3" symbol="GO..." quote="19..." height={48} />
                <Navigator
                  scroll
                  nodes={[[0, "", "doc", "XMTrading"], [0, "collapse", "people", "口座"], [1, "collapse", "server", "XMTrad"], [3, "", "user", "3702"]]}
                  tabs={["全般", "お気に入り"]}
                />
              </Sidebar>
              <Chart
                w={327} h={84} x0={0} y0={6.5} prices={["1930.30", "1924.80", "1919.30", "1913.85", "1908.35", "1902.90"]} top={3} bottom={9}
                tag="1925.97" tagTop={17} lineY={18}
                times={day("30 Jan 2023", ["02:10", "04:50", "07:30", "10:10", "12:50", "15:30", "18:10", "20:50", "23:30"], ["03:10", "05:50"])} end={13}
                expert={<>WorldOrder_Copy<Icon n="smile" s={5} /></>}
                legend={<><span>▼ GOLD#,M5&nbsp; 1926.28 1926.28 1925.58 1925.97</span><span>■ 受信側トレードコピーシステムのマジックナンバー：12345</span><span>受信側トレードコピーシステムが稼働中です。</span></>}
              >
                <path d={barPath(COPY, 1)} stroke="#006c00" strokeWidth="1" />
                <path d="M320 14h5v7h-5z" fill="#f2e3dc" />
                <path d="M322 15l2 2-2 2" stroke="#d9534a" fill="none" />
              </Chart>
            </Workspace>
            <OrderPanel label="ターミナル" side={7} cols={MT4_COLS} summary={`◎ ${summary("4 991 335")}`} tabs={mt4Tabs("記事")} />
            <Status $h={8}>
              <StatusCell $grow={112}>F1キーでヘルプが表示されます</StatusCell>
              <StatusCell $grow={52}>Default</StatusCell>
              <StatusCell $grow={45}>2023.02.01 07:20</StatusCell>
              <StatusCell $grow={31}>O: 1925.27</StatusCell>
              <StatusCell $grow={31}>H: 1925.99</StatusCell>
              <StatusCell $grow={29}>L: 1925.18</StatusCell>
              <StatusCell $grow={29}>C: 1925.91</StatusCell>
              <StatusCell $grow={29}>V: 204</StatusCell>
              <StatusCell $grow={40}><Icon n="conn" />354/13 kb</StatusCell>
            </Status>
          </Window>
        </RightColumn>
      </Desktop>
      <Pointer viewBox="0 0 5 8" aria-hidden="true"><path d="M0 0v7l1.500-1.300L2.500 8l1-.5L2.600 5.200h2z" fill="#000" /></Pointer>
    </>
  );
}
